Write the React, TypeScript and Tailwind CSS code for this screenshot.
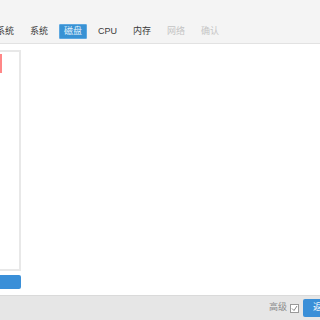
export default function App() {
  const tabs = [
    { label: "操作系统", state: "normal" },
    { label: "系统", state: "normal" },
    { label: "磁盘", state: "active" },
    { label: "CPU", state: "normal" },
    { label: "内存", state: "normal" },
    { label: "网络", state: "disabled" },
    { label: "确认", state: "disabled" },
  ];

  return (
    <div
      className="w-[320px] h-[320px] flex flex-col overflow-hidden bg-white text-[9px]"
      style={{ fontFamily: '"Liberation Sans", "Noto Sans CJK SC", sans-serif' }}
    >
      {/* wizard tabs */}
      <div className="h-[44px] shrink-0 bg-[#f4f4f4] border-b border-[#e2e2e2] flex items-start pt-[24px] overflow-hidden">
        <div className="flex gap-[6px] ml-[-27px]">
          {tabs.map((t) => (
            <div
              key={t.label}
              className={
                t.state === "active"
                  ? "h-[15px] px-[4px] flex items-center bg-[#3892d4] border border-[#5ea8e0] text-[#e6f2fc] rounded-[1px] whitespace-nowrap"
                  : t.state === "disabled"
                  ? "h-[15px] px-[5px] flex items-center text-[#c4c4c4] whitespace-nowrap"
                  : "h-[15px] px-[5px] flex items-center text-[#3a3a3a] whitespace-nowrap"
              }
            >
              {t.label}
            </div>
          ))}
        </div>
      </div>

      {/* body */}
      <div className="flex-1 flex pt-[6px] overflow-hidden">
        <div className="w-[100px] ml-[-79px] flex flex-col shrink-0">
          <div className="h-[221px] border-2 border-[#e8e8e8] bg-white pt-[1px]">
            <div className="ml-[77px] mt-[1px] w-[2px] h-[19px] bg-[#ff8787]" />
          </div>
          <div className="mt-[4px] h-[14px] bg-[#3a8fd8] rounded-[2px]" />
        </div>
      </div>

      {/* footer */}
      <div className="h-[25px] shrink-0 bg-[#e6e6e6] border-t border-[#dadada] flex items-center justify-end gap-[3px]">
        <span className="text-[#8a8a8a]">高级</span>
        <span className="w-[9px] h-[9px] border border-[#999] bg-white flex items-center justify-center">
          <svg width="7" height="7" viewBox="0 0 7 7">
            <path d="M1 3.5 L3 5.5 L6 1" stroke="#777" strokeWidth="0.9" fill="none" />
          </svg>
        </span>
        <button className="ml-[1px] h-[18px] px-[10px] bg-[#3a8fd8] text-white rounded-[2px] whitespace-nowrap mr-[-40px] w-[57px] text-left">
          返回
        </button>
      </div>
    </div>
  );
}
